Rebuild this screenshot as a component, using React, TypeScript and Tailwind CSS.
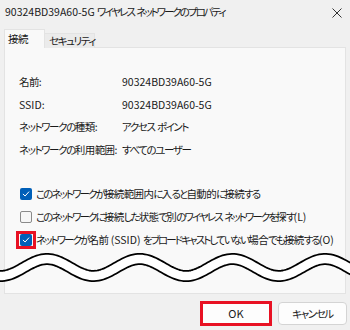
import React from "react";

const FONT = "[font-family:'Noto_Sans_CJK_JP','Noto_Sans',sans-serif] [font-feature-settings:'palt'] whitespace-nowrap";

function kind(c: string): number {
  const code = c.charCodeAt(0);
  if (code <= 0xff) return 0;
  if (code >= 0x4e00 && code <= 0x9fff) return 1;
  return 2;
}

function T({ s, k = "tracking-[-1.9px]", h = "tracking-[-0.6px]" }: { s: string; k?: string; h?: string }) {
  const runs: { t: string; kd: number }[] = [];
  for (const c of s) {
    const kd = kind(c);
    const last = runs[runs.length - 1];
    if (last && last.kd === kd) last.t += c;
    else runs.push({ t: c, kd });
  }
  return (
    <span>
      {runs.map((r, i) => (
        <span key={i} className={r.kd === 0 ? "" : r.kd === 1 ? h : k}>
          {r.t}
        </span>
      ))}
    </span>
  );
}

function Check({ checked }: { checked: boolean }) {
  if (checked) {
    return (
      <span className="w-[12px] h-[12px] rounded-[2px] bg-[#005fb8] flex items-center justify-center shrink-0">
        <svg width="8" height="8" viewBox="0 0 8 8">
          <path d="M1.2 4.2 L3.1 6 L6.8 1.9" fill="none" stroke="#fff" strokeWidth="1" strokeLinecap="round" strokeLinejoin="round" />
        </svg>
      </span>
    );
  }
  return <span className="w-[12px] h-[12px] rounded-[2px] border border-[#8a8a8a] bg-[#f6f6f6] shrink-0" />;
}

function Wave() {
  const pts: string[] = [];
  for (let x = -4; x <= 354; x += 2) {
    const y = 22.5 - 8.5 * Math.cos((2 * Math.PI * (x - 47)) / 92.7);
    pts.push(`${x},${y.toFixed(2)}`);
  }
  const p = pts.join(" ");
  return (
    <svg className="absolute left-0 top-[245px]" width="350" height="45" viewBox="0 0 350 45">
      <polyline points={p} fill="none" stroke="#000" strokeWidth="12" />
      <polyline points={p} fill="none" stroke="#fff" strokeWidth="8.5" />
    </svg>
  );
}

export default function App() {
  const rows: [string, string][] = [
    ["名前:", "90324BD39A60-5G"],
    ["SSID:", "90324BD39A60-5G"],
    ["ネットワークの種類:", "アクセス ポイント"],
    ["ネットワークの利用範囲:", "すべてのユーザー"],
  ];
  return (
    <div className={`relative w-[350px] h-[330px] bg-[#f0f0f0] text-[#1a1a1a] text-[10.5px] flex flex-col overflow-hidden ${FONT}`}>
      <div className="h-[25px] flex items-center justify-between pl-[5px] pr-[8px]">
        <span className="leading-none text-[10.5px]">
          <T s="90324BD39A60-5G ワイヤレス ネットワークのプロパティ" k="tracking-[-2px]" />
        </span>
        <svg width="10" height="10" viewBox="0 0 10 10">
          <path d="M0.5 0.5 L9.5 9.5 M9.5 0.5 L0.5 9.5" stroke="#333" strokeWidth="1" />
        </svg>
      </div>
      <div className="flex items-end pl-[4px] mt-[4px] h-[19px] relative z-10">
        <div className="h-[19px] w-[41px] bg-[#f9f9f9] border border-[#e3e3e3] border-b-0 flex items-center pl-[3px]">
          <T s="接続" h="tracking-[-0.5px]" />
        </div>
        <div className="h-[15px] w-[50px] bg-[#ebebeb] border border-[#e3e3e3] border-b-0 border-l-0 flex items-center pl-[4px]">
          <T s="セキュリティ" k="tracking-[-1.4px]" />
        </div>
      </div>
      <div className="mx-[4px] h-[247px] -mt-[1px] bg-[#f9f9f9] border border-[#e3e3e3] flex flex-col pt-[23px] pl-[14px]">
        {rows.map(([k, v]) => (
          <div key={k} className="h-[22.5px] flex items-center">
            <span className="w-[103px]">
              <T s={k} k="tracking-[-1.4px]" />
            </span>
            <T s={v} k="tracking-[-1.4px]" />
          </div>
        ))}
        <div className="h-[21px]" />
        <div className="flex flex-col pl-[1px]">
          <div className="h-[23px] flex items-center gap-[4px]">
            <Check checked />
            <T s="このネットワークが接続範囲内に入ると自動的に接続する" />
          </div>
          <div className="h-[23px] flex items-center gap-[4px]">
            <Check checked={false} />
            <T s="このネットワークに接続した状態で別のワイヤレス ネットワークを探す(L)" />
          </div>
          <div className="h-[23px] flex items-center gap-[4px] relative">
            <span className="absolute left-[-4px] top-[3px] w-[20px] h-[18px] border-[3px] border-[#e81123]" />
            <Check checked />
            <T s="ネットワークが名前 (SSID) をブロードキャストしていない場合でも接続する(O)" />
          </div>
        </div>
      </div>
      <div className="flex justify-end gap-[6px] pr-[3px] mt-[7px]">
        <div className="w-[72px] h-[25px] border-[3px] border-[#e81123] bg-[#fdfdfd] flex items-center justify-center text-[11px]">OK</div>
        <div className="w-[69px] h-[23px] mt-[1px] rounded-[4px] border border-[#d4d4d4] bg-[#fdfdfd] flex items-center justify-center">
          <T s="キャンセル" k="tracking-[-1.4px]" />
        </div>
      </div>
      <Wave />
    </div>
  );
}
